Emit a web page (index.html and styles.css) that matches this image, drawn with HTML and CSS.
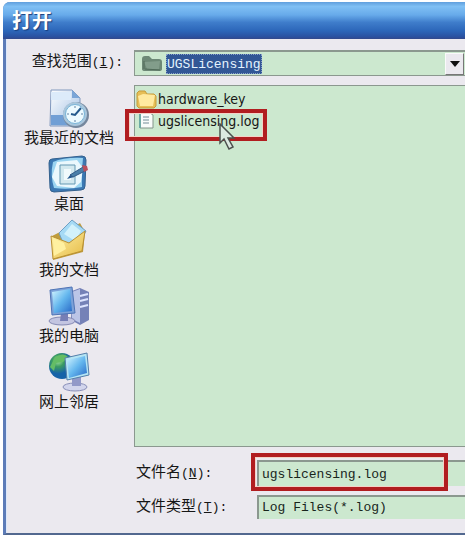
FILE: index.html
```html
<!DOCTYPE html>
<html lang="zh-CN">
<head>
<meta charset="utf-8">
<title>打开</title>
<link rel="stylesheet" href="styles.css">
</head>
<body>
<main class="dialog">
  <h1 class="title">打开</h1>
  <form class="content">
    <label class="look-label" for="folder">查找范围<span class="key">(<u>I</u>):</span></label>
    <div class="combo field">
      <svg class="combo-icon" width="24" height="22" viewBox="0 0 24 22" aria-hidden="true">
        <path d="M2 6q0-3 3-3h4l3 3h7q3 0 3 3v7q0 2-3 2H5q-3 0-3-2z" fill="#6d8876"/>
        <path d="M4 9l16-1-1 8H7z" fill="#829d8b"/>
        <path d="M4 8v8M5 16l15 1" stroke="#506b59" fill="none"/>
      </svg>
      <select class="folder" id="folder"><option>UGSLicensing</option></select>
      <button class="drop" type="button" aria-label="展开">
        <svg width="10" height="6" viewBox="0 0 10 6"><path d="M0 0h10L5 6z" fill="#111"/></svg>
      </button>
    </div>

    <nav class="places">
      <a class="place" href="#recent">
        <svg width="44" height="42" viewBox="0 0 44 42">
          <defs>
            <linearGradient id="paper" x2="1" y2="1"><stop stop-color="#fff"/><stop offset="1" stop-color="#9dbce2"/></linearGradient>
            <linearGradient id="screen" x2="1" y2="1"><stop stop-color="#d4f5ff"/><stop offset=".5" stop-color="#64b7ee"/><stop offset="1" stop-color="#2868c6"/></linearGradient>
            <linearGradient id="gold" x2="1" y2="1"><stop stop-color="#fff3ac"/><stop offset="1" stop-color="#e5b942"/></linearGradient>
            <radialGradient id="globe" cx=".35" cy=".3"><stop stop-color="#a9e6a3"/><stop offset=".45" stop-color="#3c9c62"/><stop offset="1" stop-color="#1663a8"/></radialGradient>
          </defs>
          <path d="M4 3h21l8 8v28H3z" fill="url(#paper)" stroke="#8198bd"/>
          <path d="M4 5h20v8H4z" fill="#dcebfa"/>
          <path d="M4 28h18v10H4z" fill="#719fd5"/>
          <path d="M25 3v8h8z" fill="#7aa5d7"/>
          <circle cx="29" cy="28" r="13" fill="#75879d"/>
          <circle cx="28" cy="27" r="12" fill="#a9c6dc"/>
          <circle cx="28" cy="27" r="9.500" fill="#edfaff" stroke="#79b5d9"/>
          <path d="M28 19v2M28 33v2M20 27h2M34 27h2" stroke="#6383a5"/>
          <path d="M24 27l4 1 6-7" fill="none" stroke="#24598c" stroke-width="2"/>
        </svg>
        <span>我最近的文档</span>
      </a>
      <a class="place" href="#desktop">
        <svg width="44" height="42" viewBox="0 0 44 42">
          <path d="M5 6l30-3q4 0 4 4l-1 26q0 4-4 4L7 39q-4 0-4-4L2 10q0-4 3-4z" fill="#3b78b3" stroke="#34618e"/>
          <path d="M6 9q12-5 30-4-2 15-1 29-14 3-28 1Q3 22 6 9z" fill="#9ad4f1"/>
          <path d="M10 9l20-2 6 8-2 14-7 6-17-2-5-9z" fill="#eaf8fd"/>
          <path d="M13 12h15v19H13z" fill="#d3e9ef" stroke="#6599b3"/>
          <path d="M17 16h7v11h-7z" fill="#f1fafc"/>
          <path d="M20 26l4-5 3 3z" fill="#25588e"/>
          <path d="M23 22l13-8 2 4-12 6z" fill="#4a80a9" stroke="#315b87"/>
          <path d="M35 12l5 1 1 4-4 2z" fill="#b94f5d"/>
        </svg>
        <span>桌面</span>
      </a>
      <a class="place" href="#documents">
        <svg width="44" height="42" viewBox="0 0 44 42">
          <path d="M5 17l10-5 3 1 15-9 5 9-2 20-30 8z" fill="#bf9c3d"/>
          <path d="M12 14L25 1l14 11-9 17-13-3z" fill="#a5daf5" stroke="#6f9fc3"/>
          <path d="M17 15l8-10 9 7-6 10z" fill="#d2f1fb"/>
          <path d="M4 17l13 5 5 2 16-12-3 20L6 40z" fill="url(#gold)" stroke="#b99032"/>
          <path d="M6 19l11 5 2 6-12 7z" fill="#fff0a0"/>
        </svg>
        <span>我的文档</span>
      </a>
      <a class="place" href="#computer">
        <svg width="44" height="42" viewBox="0 0 44 42">
          <path d="M25 6l8-3 9 4v28l-9 5-9-5z" fill="#7581b7"/>
          <path d="M25 7l8-3v34l-8-4z" fill="#bbc5e7"/>
          <path d="M33 11l8-2M33 16l8-2M33 22l8-2" stroke="#dce3ff" stroke-width="2"/>
          <ellipse cx="15" cy="36" rx="13" ry="4" fill="#c3c5e1" stroke="#858ab4"/>
          <path d="M14 28h7v8h-8z" fill="#767eb5"/>
          <path d="M3 5l22-3 3 26-23 2z" fill="#7ba1d8" stroke="#4f74b5"/>
          <path d="M5 7l18-3 2 22-18 2z" fill="url(#screen)"/>
        </svg>
        <span>我的电脑</span>
      </a>
      <a class="place" href="#network">
        <svg width="44" height="42" viewBox="0 0 44 42">
          <circle cx="15" cy="15" r="13" fill="url(#globe)"/>
          <path d="M8 6q9-5 13 0l-5 5-7 1-2 8-4-4z" fill="#64bd65"/>
          <ellipse cx="28" cy="36" rx="12" ry="4" fill="#d2d5ec" stroke="#8990b9"/>
          <path d="M25 26h9v9h-9z" fill="#9299c8"/>
          <path d="M18 7l22-5 2 22-22 5z" fill="#b5e5f4" stroke="#547faa"/>
          <path d="M20 9l18-4 2 17-18 5z" fill="url(#screen)"/>
        </svg>
        <span>网上邻居</span>
      </a>
    </nav>

    <ul class="files field">
      <li class="file">
        <svg width="22" height="20" viewBox="0 0 22 20">
          <path d="M2 4l2-2h6l2 3h7l2 2v10l-2 2H4l-2-2z" fill="#e6bf57" stroke="#c59b3a"/>
          <path d="M3 7l5-2 12 1-2 11H5z" fill="#ffeaa0"/>
        </svg>
        <span>hardware_key</span>
      </li>
      <li class="file">
        <svg width="22" height="20" viewBox="0 0 22 20">
          <path d="M5 2h10l3 2v13H5z" fill="#f9fcfa" stroke="#82948a"/>
          <path d="M5 3v14" stroke="#6eaaa5" stroke-width="2"/>
          <path d="M8 6h6M8 9h6M8 12h6" stroke="#748d98"/>
        </svg>
        <span>ugslicensing.log</span>
        <span class="mark"></span>
        <svg class="pointer" width="18" height="28" viewBox="0 0 18 28" aria-hidden="true">
          <path d="M1 1v19l4-4 5 10 4-2-5-9h6z" fill="#dce9e1" stroke="#4b514e" stroke-width="1.500"/>
        </svg>
      </li>
    </ul>

    <div class="inputs">
      <label for="name">文件名<span class="key">(<u>N</u>):</span></label>
      <div class="name-wrap">
        <input class="field value" id="name" type="text" value="ugslicensing.log">
        <span class="mark"></span>
      </div>
      <label for="type">文件类型<span class="key">(<u>T</u>):</span></label>
      <select class="field value" id="type"><option>Log Files(*.log)</option></select>
    </div>
  </form>
</main>
</body>
</html>
```
FILE: styles.css
```css
* { box-sizing: border-box; }
body {
  margin: 0;
  background: #fff;
  color: #161616;
  font: 15px/18px "Liberation Sans", "Noto Sans CJK SC", sans-serif;
  overflow-x: hidden;
}
.dialog {
  margin: 2px 0 0 3px;
  border-left: 4px solid #5d7cb8;
  border-bottom: 2px solid #52688f;
  border-top-left-radius: 7px;
  background: #ebe9ef;
}
.title {
  margin: 0 0 0 -4px;
  padding: 7px 9px 6px;
  border-top-left-radius: 7px;
  background: linear-gradient(#609fdd 0, #80c0f4 12%, #67aaea 35%, #3f7dcb 55%, #2c66b9 78%, #2a51a0 94%, #34498a);
  color: #fff;
  font-size: 20px;
  line-height: 24px;
  text-shadow: 1px 1px 1px #173d7c;
}
.content {
  display: grid;
  grid-template-columns: 127px minmax(0, 1fr);
  row-gap: 9px;
  padding: 11px 0 14px;
  border-left: 1px solid #dce8fa;
  margin-left: -1px;
}
.field {
  border: 1px solid #8b988f;
  border-right: 0;
  background: #cce8cf;
}
.key { font: 13px/18px "Liberation Mono", monospace; }
.look-label { padding: 2px 11px 0 0; text-align: right; white-space: nowrap; }
.combo {
  display: flex;
  align-items: center;
  height: 26px;
  padding: 1px 1px 1px 5px;
  border-width: 2px 0 1px 1px;
}
.combo-icon { margin-right: 2px; }
.folder, .value {
  appearance: none;
  border-radius: 0;
  font: 13px/20px "Liberation Mono", monospace;
  color: #18251c;
}
.folder {
  height: 20px;
  border: 1px dotted #8a9fca;
  padding: 0;
  background: #315795;
  color: #e5f4ff;
}
.drop {
  width: 19px;
  height: 22px;
  margin-left: auto;
  padding: 0;
  border: 1px solid #fafafa;
  border-right-color: #777;
  border-bottom-color: #777;
  background: #ebe9ef;
}
.drop svg { display: block; margin: auto; }
.places {
  display: flex;
  flex-direction: column;
  align-items: center;
  padding: 2px 3px 0 0;
}
.place {
  display: flex;
  flex-direction: column;
  align-items: center;
  height: 66px;
  color: inherit;
  text-decoration: none;
}
.place span { white-space: nowrap; }
.files {
  height: 362px;
  margin: 0;
  padding: 2px 0 0;
  list-style: none;
}
.file {
  display: flex;
  align-items: center;
  gap: 1px;
  position: relative;
  height: 22px;
  font: 14px/22px "DejaVu Sans Condensed", "DejaVu Sans", sans-serif;
}
.mark {
  position: absolute;
  border: 4px solid #b11d20;
  box-shadow: inset 0 0 0 1px #f3d2c7;
  pointer-events: none;
}
.file .mark { left: -10px; top: -1px; width: 142px; height: 32px; }
.pointer { position: absolute; left: 84px; top: 13px; }
.inputs {
  grid-column: 2;
  display: grid;
  grid-template-columns: 123px minmax(0, 1fr);
  row-gap: 9px;
  align-items: center;
  padding: 4px 0 0;
}
.inputs label { padding-left: 2px; white-space: nowrap; }
.name-wrap { position: relative; }
.value {
  display: block;
  width: 100%;
  height: 24px;
  padding: 0 3px;
  border-width: 2px 0 0 2px;
}
.name-wrap .value { height: 26px; }
.name-wrap .mark { left: -6px; right: 17px; top: -7px; bottom: -5px; }
```
